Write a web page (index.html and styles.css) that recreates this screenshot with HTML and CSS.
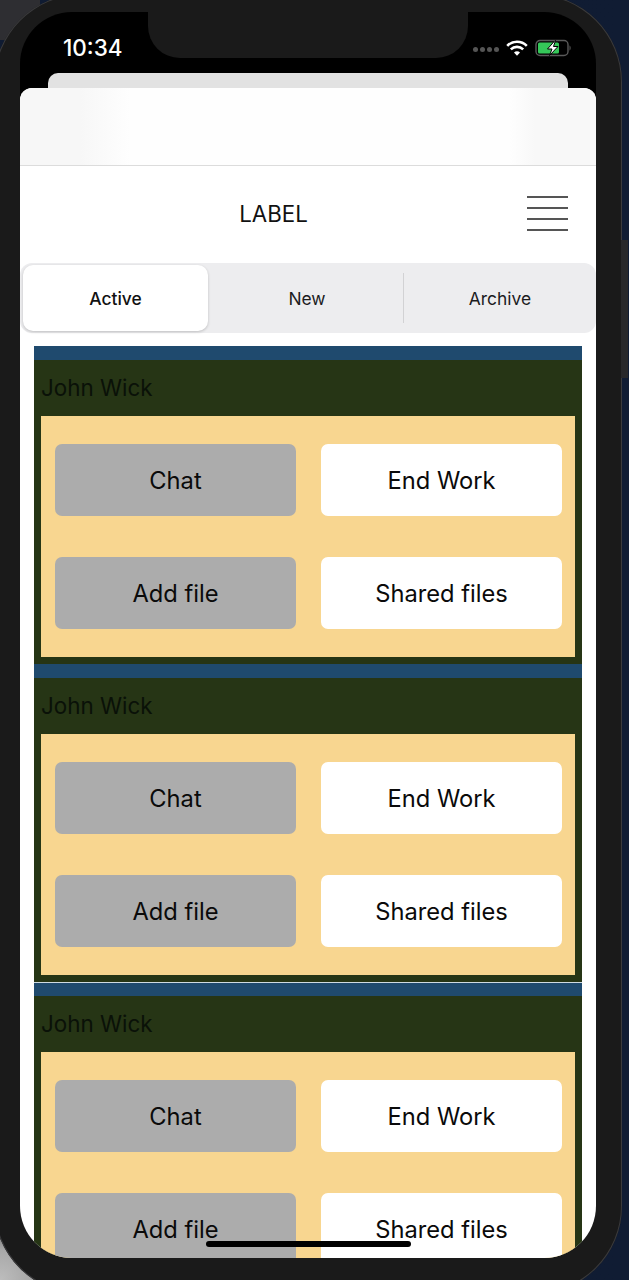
FILE: index.html
```html
<!DOCTYPE html>
<html lang="en">
<head>
    <meta charset="UTF-8">
    <meta name="viewport" content="width=device-width, initial-scale=1.0">
    <title>Jobs</title>
    <link rel="stylesheet" href="styles.css">
</head>
<body>
    <div class="device">
        <div class="screen">
            <div class="notch"></div>
            <div class="status-bar">
                <span class="time">10:34</span>
                <div class="status-icons">
                    <span class="signal"><i></i><i></i><i></i><i></i></span>
                    <svg class="wifi" width="22" height="16" viewBox="0 0 22 16">
                        <path d="M1.2 5.8C6.6 .4 15.4 .4 20.8 5.8" fill="none" stroke="#fff" stroke-width="2.6"/>
                        <path d="M4.8 9.4C8.3 6 13.7 6 17.2 9.4" fill="none" stroke="#fff" stroke-width="2.6"/>
                        <path d="M8 12.4C9.7 11 12.3 11 14 12.4L11 15.8Z" fill="#fff"/>
                    </svg>
                    <svg class="battery" width="37" height="18" viewBox="0 0 37 18">
                        <rect x="1" y="1.5" width="32" height="15" rx="4" fill="none" stroke="#5a5a5a" stroke-width="1.4"/>
                        <rect x="3" y="3.5" width="21" height="11" rx="1.5" fill="#35c759"/>
                        <path d="M34.5 6.5C36 7 36 11 34.5 11.5Z" fill="#5a5a5a"/>
                        <path d="M20 1.5L12.5 10H17L14.5 16.5L23 7.5H18.5L20.5 1.5Z" fill="#fff" stroke="#000" stroke-width="1"/>
                    </svg>
                </div>
            </div>
            <div class="back-card"></div>
            <div class="sheet">
                <div class="sheet-top"></div>
                <header class="nav">
                    <h1>LABEL</h1>
                    <div class="menu-btn"><i></i><i></i><i></i><i></i></div>
                </header>
                <nav class="tabs">
                    <span class="tab tab-first active">Active</span>
                    <span class="tab tab-second">New</span>
                    <span class="tab-divider"></span>
                    <span class="tab tab-third">Archive</span>
                </nav>
                <main class="job-list">
                    <section class="job">
                        <div class="job-bar"></div>
                        <div class="job-body">
                            <h2>John Wick</h2>
                            <div class="job-actions">
                                <button class="btn btn-grey">Chat</button>
                                <button class="btn">End Work</button>
                                <button class="btn btn-grey">Add file</button>
                                <button class="btn">Shared files</button>
                            </div>
                        </div>
                    </section>
                    <section class="job">
                        <div class="job-bar"></div>
                        <div class="job-body">
                            <h2>John Wick</h2>
                            <div class="job-actions">
                                <button class="btn btn-grey">Chat</button>
                                <button class="btn">End Work</button>
                                <button class="btn btn-grey">Add file</button>
                                <button class="btn">Shared files</button>
                            </div>
                        </div>
                    </section>
                    <section class="job">
                        <div class="job-bar job-bar-seam"></div>
                        <div class="job-body">
                            <h2>John Wick</h2>
                            <div class="job-actions">
                                <button class="btn btn-grey">Chat</button>
                                <button class="btn">End Work</button>
                                <button class="btn btn-grey">Add file</button>
                                <button class="btn">Shared files</button>
                            </div>
                        </div>
                    </section>
                </main>
            </div>
            <div class="home-indicator"></div>
        </div>
    </div>
    <span class="side-button"></span>
</body>
</html>
```

FILE: styles.css
```css
html, body {
    height: 1280px;
    overflow: hidden;
}
body {
    font-family: Inter, "Liberation Sans", sans-serif;
    margin: 0;
    padding: 0;
    position: relative;
    background:
        radial-gradient(circle at 0 1280px, #bdbdbd 0, #a8a8a8 30px, #777 50px, transparent 70px),
        linear-gradient(#2e2e32, #2e2e32) 0 0 / 40px 40px no-repeat,
        linear-gradient(90deg, #0f1b32, #101c33);
}
.side-button {
    position: absolute;
    right: 1px;
    top: 240px;
    width: 7px;
    height: 138px;
    background-color: #28282a;
}
.device {
    box-sizing: border-box;
    width: 628px;
    height: 1300px;
    margin: -6px 0 0 -6px;
    padding: 18px 26px 36px 26px;
    background-color: #1a1a1a;
    border-radius: 88px;
    box-shadow: inset 0 0 0 1px #3a3a3c;
}
.screen {
    position: relative;
    display: flex;
    flex-direction: column;
    height: 100%;
    background-color: #000;
    border-radius: 52px;
    overflow: hidden;
}
.notch {
    position: absolute;
    left: 128px;
    top: 0;
    width: 320px;
    height: 46px;
    background-color: #1a1a1a;
    border-radius: 0 0 32px 32px;
}
.status-bar {
    display: flex;
    justify-content: space-between;
    align-items: center;
    height: 61px;
    flex-shrink: 0;
    padding: 10px 24px 0 43px;
    box-sizing: border-box;
    color: #fff;
}
.time {
    font-size: 22.5px;
    font-weight: 500;
}
.status-icons {
    display: flex;
    align-items: center;
}
.signal {
    display: flex;
    gap: 2px;
    margin-right: 7px;
    padding-top: 3px;
}
.signal i {
    width: 5px;
    height: 5px;
    border-radius: 50%;
    background-color: #555;
}
.wifi {
    margin-right: 7px;
}
.back-card {
    height: 15px;
    flex-shrink: 0;
    margin: 0 28px;
    background-color: #e2e2e2;
    border-radius: 10px 10px 0 0;
}
.sheet {
    flex: 1;
    min-height: 0;
    background-color: #fff;
    border-radius: 12px 12px 0 0;
    overflow: hidden;
}
.sheet-top {
    height: 77px;
    background: linear-gradient(90deg, #f7f7f7 0, #f7f7f7 60px, #fefefe 110px, #fefefe 490px, #f8f8f8 515px, #f8f8f8 100%);
    border-bottom: 1px solid #dcdcdc;
}
.nav {
    display: flex;
    align-items: center;
    height: 97px;
    padding-right: 28px;
}
.nav h1 {
    flex: 1;
    margin: 0 0 2px;
    font-size: 22.3px;
    font-weight: 400;
    text-align: center;
    color: #111;
}
.menu-btn {
    display: flex;
    flex-direction: column;
    gap: 9px;
    width: 41px;
    margin-bottom: 2px;
}
.menu-btn i {
    height: 2px;
    background-color: #555;
}
.tabs {
    display: flex;
    align-items: center;
    height: 70px;
    padding: 0 0 0 3px;
    background-color: #ededef;
    border-radius: 12px;
}
.tab {
    display: flex;
    justify-content: center;
    align-items: center;
    height: 66px;
    font-size: 17.4px;
    font-weight: 400;
    color: #1c1c1e;
}
.tab-first {
    width: 185px;
    margin-right: 3px;
}
.tab-second {
    width: 192px;
}
.tab-third {
    flex: 1;
}
.tab-divider {
    width: 1px;
    height: 50px;
    background-color: #d2d2d4;
}
.tab.active {
    background-color: #fff;
    border-radius: 10px;
    box-shadow: 0 1px 3px rgba(0, 0, 0, 0.2);
    font-weight: 500;
    color: #111;
}
.job-list {
    padding: 13px 14px 0;
}
.job-bar {
    height: 14px;
    background-color: #1f4a6e;
}
.job-bar-seam {
    box-sizing: border-box;
    border-top: 1px solid #cfdbe2;
}
.job-body {
    height: 304px;
    box-sizing: border-box;
    padding: 0 7px;
    background-color: #263515;
}
.job-body h2 {
    margin: 0;
    height: 56px;
    line-height: 56px;
    font-size: 22.4px;
    font-weight: 400;
    color: #0a1108;
}
.job-actions {
    display: grid;
    grid-template-columns: 241px 241px;
    gap: 41px 25px;
    height: 241px;
    box-sizing: border-box;
    padding: 28px 13px 28px 14px;
    background-color: #f8d690;
}
.btn {
    height: 72px;
    padding: 0;
    border: none;
    border-radius: 7px;
    background-color: #fff;
    font-family: inherit;
    font-size: 23.7px;
    color: #0a0a0a;
}
.btn-grey {
    background-color: #acacac;
}
.home-indicator {
    position: absolute;
    left: 186px;
    bottom: 11px;
    width: 205px;
    height: 6px;
    background-color: #000;
    border-radius: 3px;
}
```
